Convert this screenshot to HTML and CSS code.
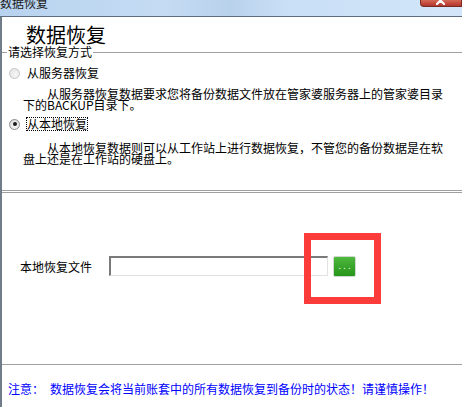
FILE: index.html
```html
<!DOCTYPE html>
<html lang="zh-CN">
<head>
<meta charset="utf-8">
<title>数据恢复</title>
<link rel="stylesheet" href="styles.css">
</head>
<body>
<div class="window">
  <div class="titlebar">
    <span class="title">数据恢复</span>
    <span class="close">
      <svg width="42" height="8" viewBox="0 0 42 8"><path d="M17 -3 L24 4 M24 -3 L17 4" stroke="#fff" stroke-width="2.2" stroke-linecap="round"/></svg>
    </span>
  </div>
  <div class="main">
    <h1 class="heading">数据恢复</h1>
    <fieldset class="group">
      <legend class="legend">请选择恢复方式</legend>
      <div class="option option-1"><span class="radio"></span><span class="opt-label">从服务器恢复</span></div>
      <p class="desc desc-1">从服务器恢复数据要求您将备份数据文件放在管家婆服务器上的管家婆目录下的BACKUP目录下。</p>
      <div class="option option-2"><span class="radio checked"></span><span class="opt-label focus">从本地恢复</span></div>
      <p class="desc desc-2">从本地恢复数据则可以从工作站上进行数据恢复，不管您的备份数据是在软盘上还是在工作站的硬盘上。</p>
    </fieldset>
    <div class="file-section">
      <div class="file-row">
        <span class="file-label">本地恢复文件</span>
        <span class="file-input"></span>
        <span class="browse-wrap">
          <span class="browse">...</span>
          <span class="highlight"></span>
        </span>
      </div>
    </div>
    <div class="footer">
      <span class="note-label">注意：</span><span class="note-text">数据恢复会将当前账套中的所有数据恢复到备份时的状态！请谨慎操作！</span>
    </div>
  </div>
</div>
</body>
</html>
```
FILE: styles.css
```css
html, body {
  margin: 0;
  padding: 0;
  background: #fff;
}
body {
  font-family: "Noto Sans CJK SC", "Noto Sans", sans-serif;
  font-size: 12px;
  color: #000;
}
.window {
  width: 462px;
  height: 407px;
  overflow: hidden;
  display: flex;
  flex-direction: column;
}
.titlebar {
  height: 16px;
  flex: none;
  display: flex;
  align-items: flex-start;
  overflow: hidden;
  border-bottom: 1px solid #5f6e7e;
  background: linear-gradient(90deg, #b8d3ef 0%, #c4dbf3 35%, #b9d2eb 50%, #c9dff6 62%, #d3e6f9 100%);
}
.title {
  font-size: 12px;
  line-height: 12px;
  margin-top: -3px;
  color: #1a1a1a;
}
.close {
  margin-left: auto;
  width: 42px;
  height: 7px;
  box-sizing: border-box;
  border: 1px solid #7a2a22;
  border-top: none;
  border-radius: 0 0 0 4px;
  background: linear-gradient(180deg, #d46a58 0%, #c2483a 60%, #a8392e 100%);
  overflow: hidden;
  display: block;
}
.close svg {
  display: block;
  margin: 0 0 0 -1px;
}
.main {
  flex: 1;
  display: flex;
  flex-direction: column;
  border-left: 2px solid #6f7c8a;
  background: #fff;
}
.heading {
  margin: 0;
  padding: 9px 0 0 24px;
  height: 18px;
  font-size: 20px;
  line-height: 18px;
  font-weight: normal;
  color: #000;
}
.group {
  margin: 2px 0 0 0;
  padding: 0 0 26px 0;
  min-inline-size: 0;
  border: none;
  border-top: 1px solid #a0a0a0;
  border-bottom: 3px double #a0a0a0;
}
.legend {
  margin-left: 5px;
  padding: 0 1px;
  font-size: 12px;
  line-height: 12px;
}
.option {
  display: flex;
  align-items: center;
  height: 14px;
  padding-left: 7px;
}
.option-1 {
  margin-top: 8px;
}
.option-2 {
  margin-top: 7px;
}
.radio {
  width: 11px;
  height: 11px;
  box-sizing: border-box;
  border-radius: 50%;
  border: 1px solid #c4c4c4;
  background: radial-gradient(circle at 60% 65%, #f6f6f6 0%, #e2e2e2 100%);
  display: flex;
  align-items: center;
  justify-content: center;
}
.radio.checked {
  border-color: #8c8c8c;
  background: radial-gradient(circle at 60% 65%, #f7f7f7 0%, #d8d8d8 100%);
}
.radio.checked::after {
  content: "";
  width: 4px;
  height: 4px;
  border-radius: 50%;
  background: #1a1a1a;
}
.opt-label {
  margin-left: 6px;
  line-height: 12px;
  border: 1px dotted transparent;
  padding: 0;
}
.opt-label.focus {
  border-color: #000;
}
.desc {
  margin: 8px 0 0 21px;
  width: 426px;
  text-indent: 24px;
  font-size: 12px;
  line-height: 11px;
}
.desc-2 {
  margin-top: 11px;
}
.file-section {
  flex: 1;
  padding-top: 63px;
}
.file-row {
  display: flex;
  align-items: flex-start;
  padding-left: 18px;
}
.file-label {
  margin-top: 5px;
  line-height: 12px;
  width: 72px;
}
.file-input {
  margin-left: 17px;
  width: 219px;
  height: 20px;
  box-sizing: border-box;
  border-top: 2px solid #7a7a7a;
  border-left: 2px solid #7a7a7a;
  border-right: 1px solid #e2e2e2;
  border-bottom: 1px solid #e2e2e2;
  background: #fff;
}
.browse-wrap {
  position: relative;
  margin-left: 5px;
}
.browse {
  display: block;
  width: 23px;
  height: 21px;
  box-sizing: border-box;
  border: 1px solid #cfd8cc;
  border-radius: 2px;
  background: linear-gradient(180deg, #4fb83e 0%, #3aa52b 50%, #27951b 100%);
  color: #fff;
  font-family: "DejaVu Sans", sans-serif;
  font-size: 9px;
  line-height: 19px;
  letter-spacing: 2px;
  text-align: center;
  padding-left: 2px;
}
.highlight {
  position: absolute;
  left: -29px;
  top: -23px;
  width: 77px;
  height: 71px;
  box-sizing: border-box;
  border: 7px solid #fc3b3b;
}
.footer {
  flex: none;
  height: 43px;
  box-sizing: border-box;
  border-top: 1px solid #a0a0a0;
  padding: 18px 0 0 6px;
  color: #0000ff;
  line-height: 12px;
  white-space: nowrap;
}
.note-text {
  margin-left: 6px;
}
```
